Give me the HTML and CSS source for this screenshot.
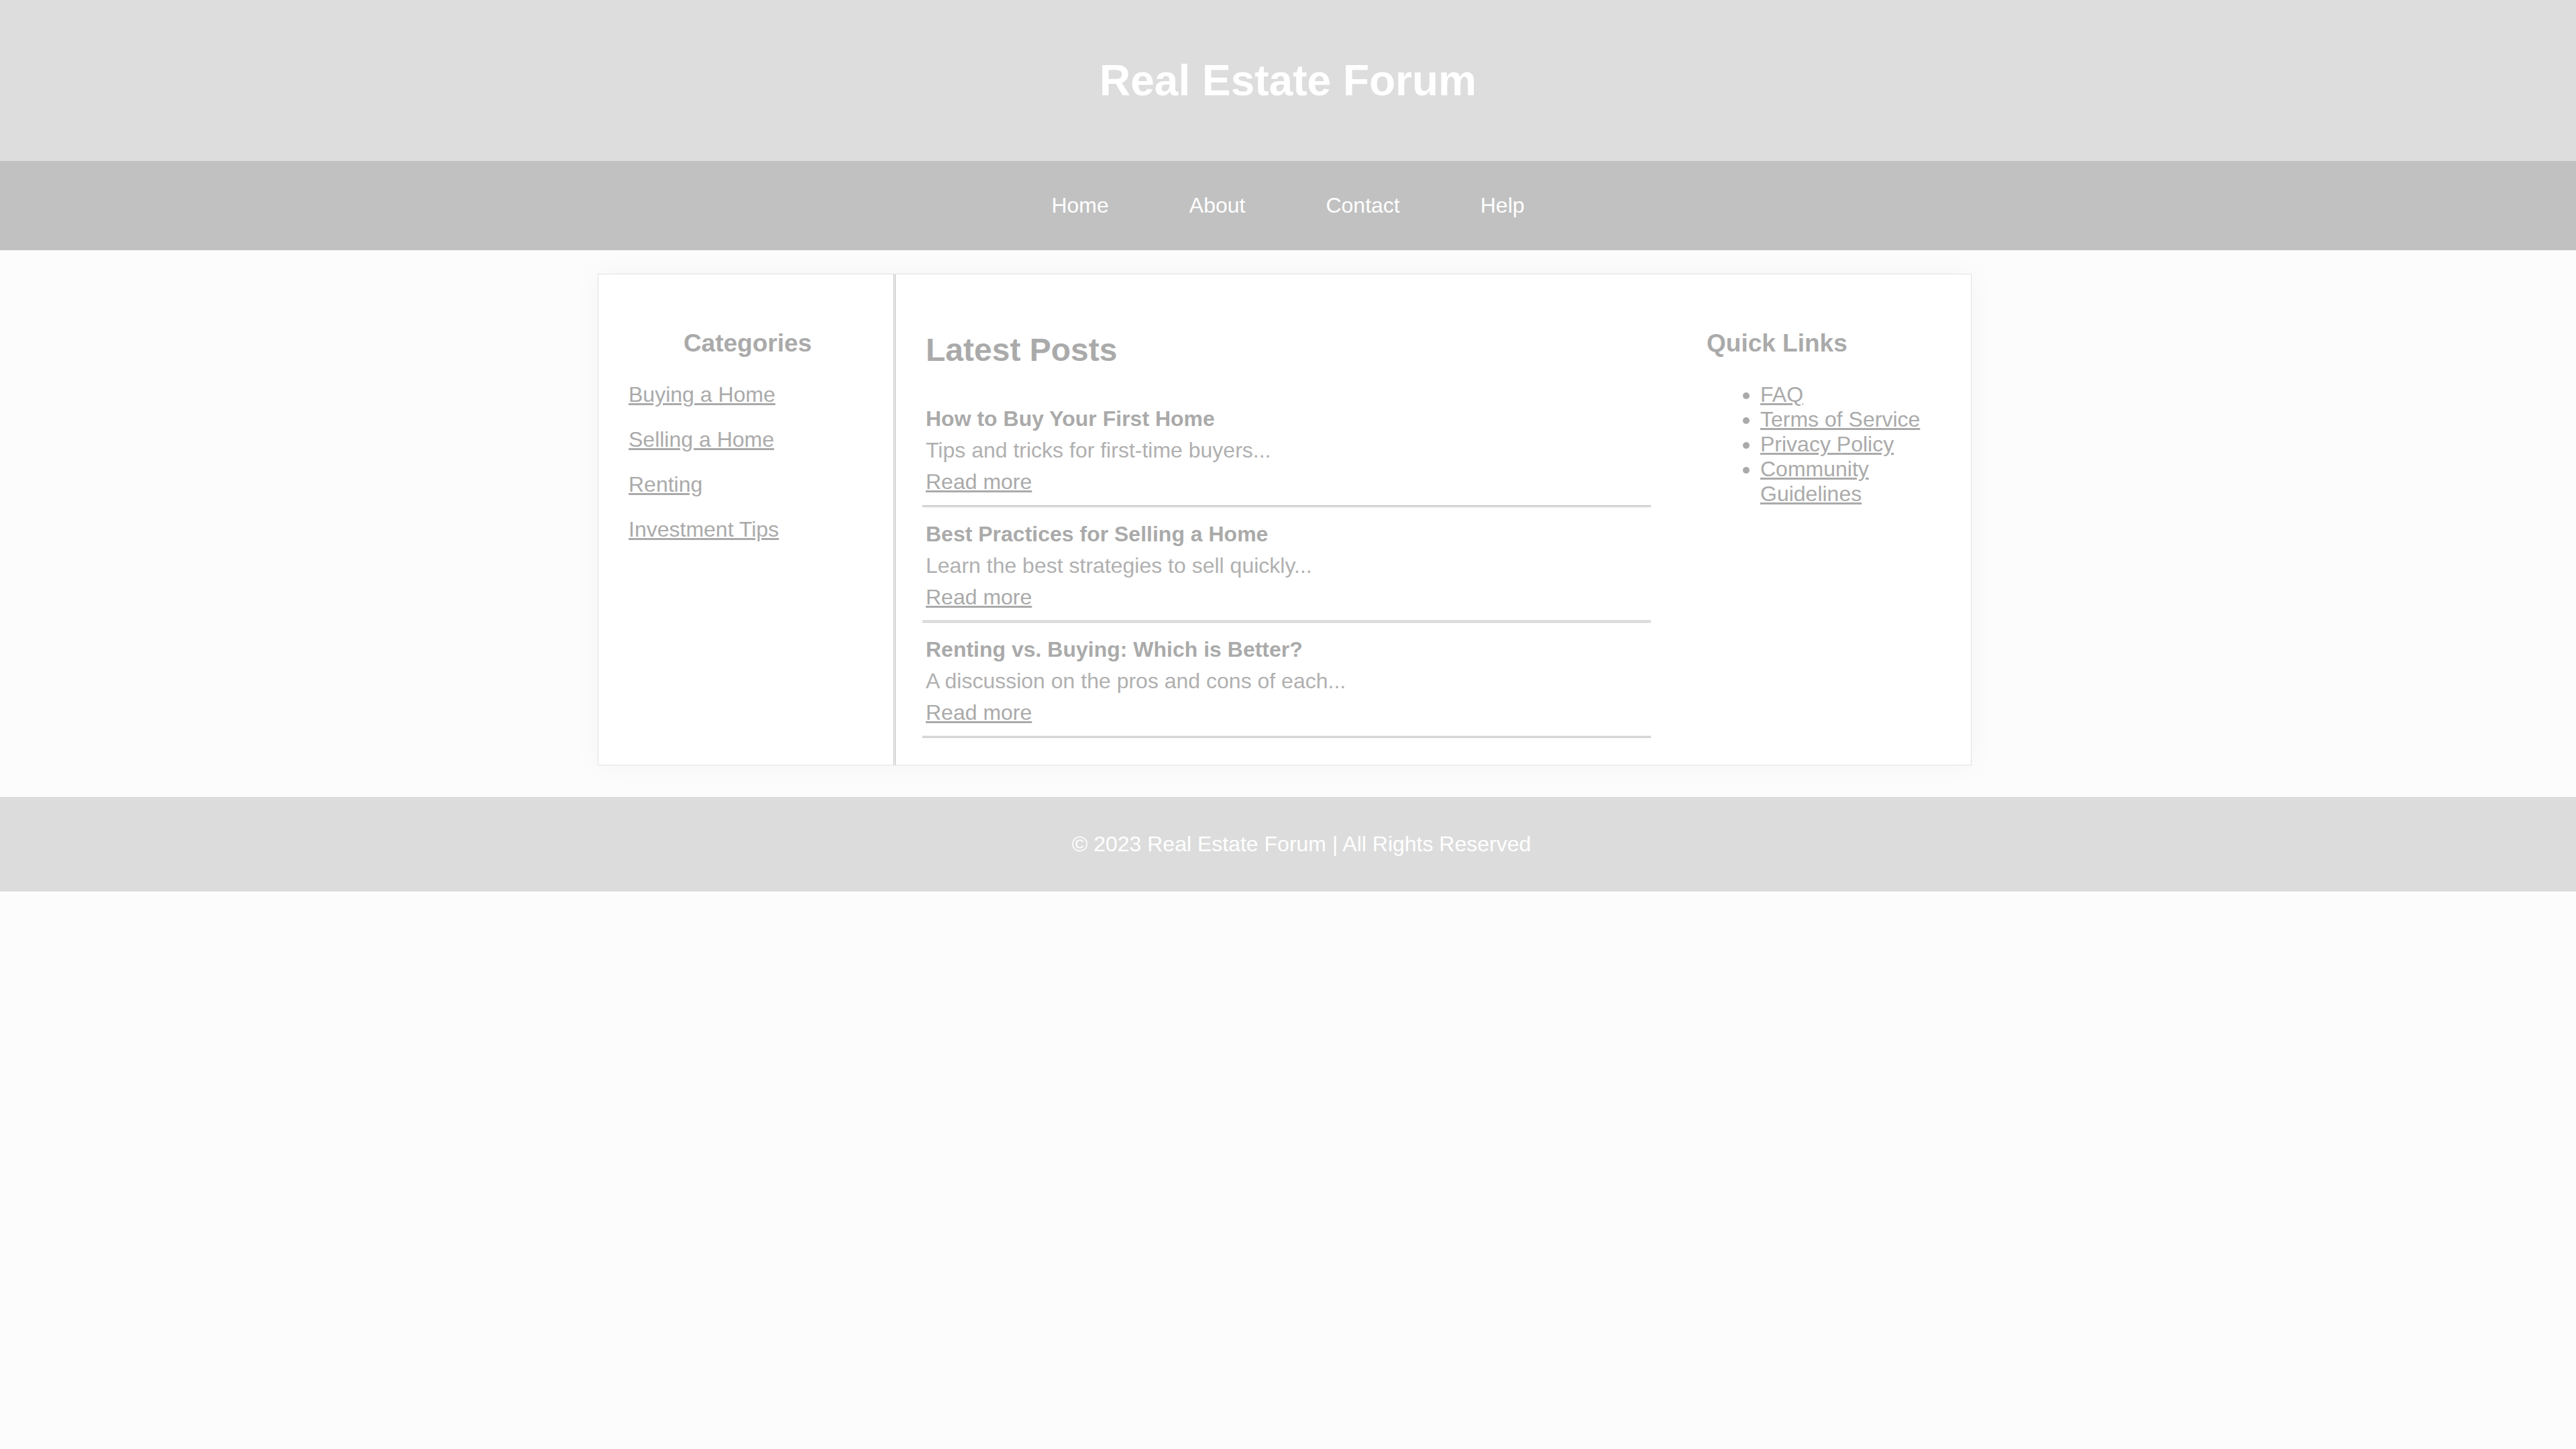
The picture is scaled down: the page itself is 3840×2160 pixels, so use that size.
FILE: index.html
```html
<!DOCTYPE html>
<html lang="en">
<head>
<meta charset="utf-8">
<title>Real Estate Forum</title>
<link rel="stylesheet" href="styles.css">
</head>
<body>
<header class="site-header">
  <h1 class="site-title">Real Estate Forum</h1>
</header>
<nav class="site-nav">
  <ul class="nav-list">
    <li><a href="#">Home</a></li>
    <li><a href="#">About</a></li>
    <li><a href="#">Contact</a></li>
    <li><a href="#">Help</a></li>
  </ul>
</nav>
<div class="container">
  <aside class="sidebar">
    <h3 class="side-title center">Categories</h3>
    <ul class="cat-list">
      <li><a href="#">Buying a Home</a></li>
      <li><a href="#">Selling a Home</a></li>
      <li><a href="#">Renting</a></li>
      <li><a href="#">Investment Tips</a></li>
    </ul>
  </aside>
  <main class="content">
    <h2 class="content-title">Latest Posts</h2>
    <div class="post">
      <h4 class="post-title">How to Buy Your First Home</h4>
      <p class="post-desc">Tips and tricks for first-time buyers...</p>
      <p class="post-link"><a href="#">Read more</a></p>
    </div>
    <div class="post">
      <h4 class="post-title">Best Practices for Selling a Home</h4>
      <p class="post-desc">Learn the best strategies to sell quickly...</p>
      <p class="post-link"><a href="#">Read more</a></p>
    </div>
    <div class="post">
      <h4 class="post-title">Renting vs. Buying: Which is Better?</h4>
      <p class="post-desc">A discussion on the pros and cons of each...</p>
      <p class="post-link"><a href="#">Read more</a></p>
    </div>
  </main>
  <aside class="quick">
    <h3 class="side-title">Quick Links</h3>
    <ul class="quick-list">
      <li><a href="#">FAQ</a></li>
      <li><a href="#">Terms of Service</a></li>
      <li><a href="#">Privacy Policy</a></li>
      <li><a href="#">Community Guidelines</a></li>
    </ul>
  </aside>
</div>
<footer class="site-footer">
  <p class="footer-text">© 2023 Real Estate Forum | All Rights Reserved</p>
</footer>
</body>
</html>
```
FILE: styles.css
```css
body {
  margin: 0;
  background: #fcfcfc;
  font-family: "Liberation Sans", Arial, sans-serif;
  font-size: 32px;
  color: #aaaaaa;
}

a {
  color: #aaaaaa;
}

.site-header {
  background: #dddddd;
  padding: 40px;
  text-align: center;
}

.site-title {
  margin: 43px 0;
  font-size: 64px;
  font-weight: bold;
  color: #ffffff;
}

.site-nav {
  background: #c1c1c1;
  padding: 48px 0;
}

.nav-list {
  list-style: none;
  margin: 0;
  padding: 0;
  display: flex;
  justify-content: center;
  gap: 120px;
}

.nav-list a {
  color: #ffffff;
  text-decoration: none;
}

.container {
  box-sizing: border-box;
  width: 2048px;
  margin: 35px 0 0 calc(50% - 1029px);
  background: #ffffff;
  border: 1px solid #e2e2e2;
  box-shadow: 0 0 40px rgba(0, 0, 0, 0.035);
  display: flex;
}

.sidebar {
  flex: none;
  width: 355px;
  padding: 45px 40px 40px 45px;
  border-right: 3px double #bcbcbc;
}

.content {
  flex: none;
  width: 1086px;
  padding: 40px;
}

.quick {
  flex: 1;
  padding: 45px 40px 40px 43px;
}

.side-title {
  margin: 37px 0;
  font-size: 37px;
  font-weight: bold;
}

.center {
  text-align: center;
}

.cat-list {
  list-style: none;
  margin: 0;
  padding: 0;
}

.cat-list li {
  margin-bottom: 30px;
}

.quick-list {
  margin: 0;
  padding-left: 80px;
}

.content-title {
  margin: 45px 0 35px;
  padding-left: 5px;
  font-size: 48px;
  font-weight: bold;
}

.post {
  padding: 22px 5px 16px;
  border-bottom: 3px double #b8b8b8;
}

.post-title {
  margin: 0 0 10px;
  font-size: 32px;
  font-weight: bold;
}

.post-desc {
  margin: 0 0 10px;
  color: #b0b0b0;
}

.post-link {
  margin: 0;
}

.site-footer {
  margin-top: 47px;
  background: #dcdcdc;
  padding: 20px 0 20px 40px;
  text-align: center;
}

.footer-text {
  margin: 32px 0;
  color: #ffffff;
}
```
